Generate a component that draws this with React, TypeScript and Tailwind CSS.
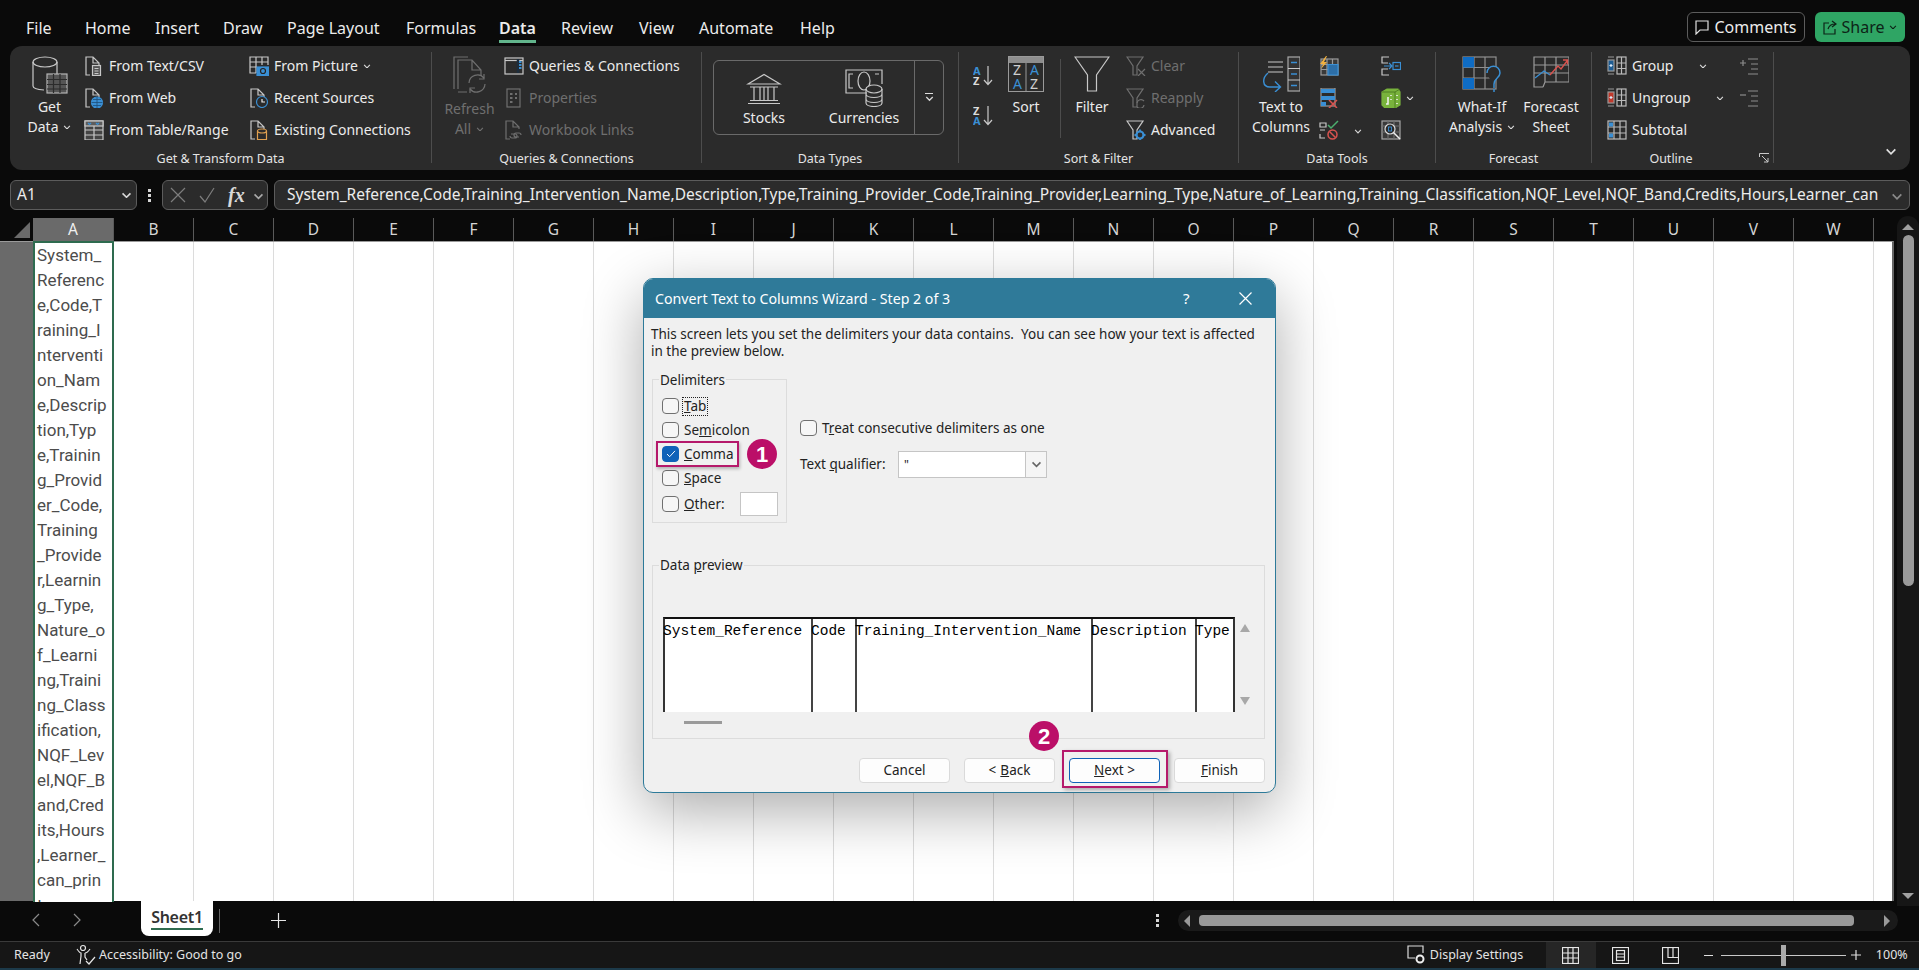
import type { ReactNode } from "react";

const GRAY = "#c8c8c8";
const DIM = "#6f6f6f";
const BLUE = "#3a8fd4";
const COLUMNS = "ABCDEFGHIJKLMNOPQRSTUVW".split("");
const CELL_LINES = [
  "System_", "Referenc", "e,Code,T", "raining_I", "nterventi", "on_Nam", "e,Descrip", "tion,Typ", "e,Trainin",
  "g_Provid", "er_Code,", "Training", "_Provide", "r,Learnin", "g_Type,", "Nature_o", "f_Learni", "ng,Traini",
  "ng_Class", "ification,", "NQF_Lev", "el,NQF_B", "and,Cred", "its,Hours", ",Learner_", "can_prin", "t",
];
const FORMULA =
  "System_Reference,Code,Training_Intervention_Name,Description,Type,Training_Provider_Code,Training_Provider,Learning_Type,Nature_of_Learning,Training_Classification,NQF_Level,NQF_Band,Credits,Hours,Learner_can";

function Icon({ w = 20, h = 20, c = GRAY, children }: { w?: number; h?: number; c?: string; children: ReactNode }) {
  return (
    <svg width={w} height={h} viewBox={`0 0 ${w} ${h}`} fill="none" stroke={c} strokeWidth="1.2" className="shrink-0">
      {children}
    </svg>
  );
}

function Chev({ c = "#d8d8d8", w = 8 }: { c?: string; w?: number }) {
  return (
    <svg width={w} height={w * 0.6} viewBox="0 0 8 5" fill="none" stroke={c} strokeWidth="1.2" className="shrink-0 inline-block">
      <path d="M1 1l3 3 3-3" />
    </svg>
  );
}

const Doc = () => <path d="M6 19H2V1h7l6 6v2M9 1v6h6" />;

const GetDataIcon = () => (
  <Icon w={36} h={38}>
    <ellipse cx="13" cy="6" rx="12" ry="5" />
    <path d="M1 6v24c0 2 4 3.5 11 4M25 6v12" />
    <rect x="15" y="18" width="20" height="19" fill="#555" stroke="#b5b5b5" />
    <path d="M15 23.5h20M15 28.500h20M15 33h20M21.500 18v19M28 18v19" stroke="#2b2b2b" />
  </Icon>
);
const TextCsvIcon = () => (
  <Icon>
    <Doc />
    <rect x="8.500" y="9.500" width="8" height="10" fill="#555" />
    <path d="M10.500 12.500h4M10.500 15h4M10.500 17.500h4" />
  </Icon>
);
const WebIcon = () => (
  <Icon>
    <Doc />
    <circle cx="13" cy="14.500" r="5.500" fill={BLUE} stroke={BLUE} />
    <path d="M7.500 14.500h11M13 9v11M9 11.500h8M9 17.500h8" stroke="#1d4e78" strokeWidth=".8" />
  </Icon>
);
const TableIcon = () => (
  <Icon>
    <rect x="1" y="1" width="18" height="19" fill="#444" />
    <rect x="1" y="1" width="18" height="5" fill="#5d5d5d" />
    <path d="M4 3l1.500 1.500L7 3M12 3l1.500 1.500L15 3" stroke={BLUE} />
    <path d="M1 10h18M1 15h18M10 6v14" />
  </Icon>
);
const PictureIcon = () => (
  <Icon>
    <path d="M7 17H1V1h18v8M1 6h18M1 11h7M7 1v16M13 1v8" />
    <rect x="8" y="11" width="12" height="8.500" fill={BLUE} stroke={BLUE} />
    <circle cx="14" cy="15" r="2.500" stroke="#222" />
  </Icon>
);
const RecentIcon = () => (
  <Icon>
    <Doc />
    <circle cx="13" cy="14" r="5.500" fill="#2b2b2b" stroke={BLUE} />
    <path d="M13 11v3h3" stroke="#eee" />
  </Icon>
);
const ExistingIcon = () => (
  <Icon>
    <Doc />
    <path d="M8.500 11v8.500h9V11" stroke="#e0a050" />
    <ellipse cx="13" cy="11" rx="4.500" ry="2" stroke="#e0a050" />
  </Icon>
);
const QueriesIcon = () => (
  <Icon>
    <rect x="1" y="2" width="18" height="16" />
    <path d="M1 4.500h18" />
    <path d="M14 3v14" strokeWidth="2.500" stroke="#1d2d3c" />
    <path d="M15 6h2.500M15 9h2.500M15 12h2.500" stroke={BLUE} strokeWidth="2" />
  </Icon>
);
const PropertiesIcon = () => (
  <Icon c={DIM}>
    <rect x="3" y="1" width="13" height="18" />
    <path d="M6 6h2.500M11 6h2M6 10h2.500M11 10h2M6 14h2.500" strokeWidth="2" />
  </Icon>
);
const LinksIcon = () => (
  <Icon c={DIM}>
    <Doc />
    <path d="M7 14h4a2 2 0 0 1 0 4H8a2 2 0 0 1-2-2M15 17h-3a2 2 0 0 1 0-4h3a2 2 0 0 1 2 2" />
  </Icon>
);
const RefreshIcon = () => (
  <Icon w={36} h={38} c={DIM}>
    <path d="M1 33V1h14M5 33V4h14l9 10v6M19 4v10h9M5 36h9" transform="translate(1 0)" />
    <path d="M17 27a8.500 8.500 0 0 1 15-5M33 28a8.500 8.500 0 0 1-15 5" />
    <path d="M32 18v5h-5M18 37v-5h5" />
  </Icon>
);
const StocksIcon = () => (
  <Icon w={36} h={32}>
    <path d="M2 11L18 1.500 34 11zM4 14h28M2 30.500h32M4 27.500h28M8 14v13M14 14v13M22 14v13M28 14v13M18 14v13" />
  </Icon>
);
const CurrenciesIcon = () => (
  <Icon w={38} h={38}>
    <path d="M22 24H1V1h36v14" />
    <path d="M8 5H4v14h4M30 5h4" />
    <ellipse cx="19" cy="12" rx="6" ry="9" />
    <ellipse cx="29" cy="20" rx="8" ry="4" fill="#2b2b2b" />
    <path d="M21 20v14c0 2 3.500 3.500 8 3.500s8-1.500 8-3.500V20M21 25c0 2 3.500 3.500 8 3.500s8-1.500 8-3.500M21 30c0 2 3.500 3.500 8 3.500s8-1.500 8-3.500" />
  </Icon>
);
const SortLetters = ({ first, second, firstC, secondC }: { first: string; second: string; firstC: string; secondC: string }) => (
  <svg width="22" height="22" viewBox="0 0 22 22" fill="none" className="shrink-0">
    <text x="0" y="10" fontSize="11" fontWeight="700" fontFamily="Noto Sans" fill={firstC}>{first}</text>
    <text x="0" y="20" fontSize="11" fontWeight="700" fontFamily="Noto Sans" fill={secondC}>{second}</text>
    <path d="M15 1v18M11 15l4 4.500 4-4.500" stroke={GRAY} strokeWidth="1.200" />
  </svg>
);
const SortIcon = () => (
  <svg width="36" height="36" viewBox="0 0 36 36" fill="none" className="shrink-0">
    <rect x=".5" y=".5" width="35" height="35" stroke="#9a9a9a" />
    <rect x="1" y="1" width="34" height="6" fill="#8e8e8e" />
    <path d="M18 7v29" stroke="#9a9a9a" />
    <text x="5" y="19" fontSize="14" fontFamily="Noto Sans" fill="#cfcfcf">Z</text>
    <text x="5" y="33" fontSize="14" fontFamily="Noto Sans" fill={BLUE}>A</text>
    <text x="22" y="19" fontSize="14" fontFamily="Noto Sans" fill={BLUE}>A</text>
    <text x="22" y="33" fontSize="14" fontFamily="Noto Sans" fill="#cfcfcf">Z</text>
  </svg>
);
const FilterIcon = () => (
  <Icon w={36} h={36}>
    <path d="M1 1h34L22.500 19v16h-9V19z" />
  </Icon>
);
const SmallFunnel = () => <path d="M1 1h16l-6 9v9H7v-9z" />;
const ClearIcon = () => (
  <Icon c={DIM}>
    <SmallFunnel />
    <path d="M12 13l7 7M19 13l-7 7" />
  </Icon>
);
const ReapplyIcon = () => (
  <Icon c={DIM}>
    <SmallFunnel />
    <path d="M11 15a4 4 0 0 1 7-2M18 17a4 4 0 0 1-7 2" />
  </Icon>
);
const AdvancedIcon = () => (
  <Icon>
    <SmallFunnel />
    <circle cx="14" cy="15" r="3.500" fill="#2b2b2b" stroke={BLUE} strokeWidth="2.200" />
    <path d="M14 9.500v2M14 18.500v2M8.500 15h2M17.500 15h2" stroke={BLUE} strokeWidth="1.800" />
  </Icon>
);
const TextColumnsIcon = () => (
  <Icon w={38} h={36}>
    <path d="M6 6h15M6 11h15M6 16h15" />
    <path d="M6 17C0 22 0 31 8 31h10M13 25.500L18.500 31 13 36" stroke={BLUE} strokeWidth="1.400" />
    <rect x="26" y="1" width="12" height="34" fill="#333" stroke="#a8a8a8" />
    <path d="M26 12.500h12M26 24h12" />
    <path d="M29 6.500h6M29 18h6M29 29.500h6" stroke={BLUE} strokeWidth="1.500" />
  </Icon>
);
const FlashIcon = () => (
  <Icon>
    <rect x="2" y="3" width="17" height="16" fill="#3a3a3a" stroke="#9a9a9a" />
    <path d="M2 8.500h17M2 13.500h17M8 3v16M13.500 3v16" stroke="#9a9a9a" />
    <path d="M9 8.500h10v10.500H9z" fill="#2d6fa8" stroke={BLUE} />
    <path d="M7 0L1 8h3l-2 5 6-7H5l3-6z" fill="#f0b040" stroke="none" />
  </Icon>
);
const DuplicatesIcon = () => (
  <Icon>
    <rect x="2" y="0" width="14" height="18" stroke="#999" />
    <rect x="2" y="1" width="14" height="4" fill={BLUE} stroke="none" />
    <rect x="2" y="8" width="14" height="4" fill={BLUE} stroke="none" />
    <rect x="2" y="14" width="5" height="4" fill={BLUE} stroke="none" />
    <path d="M10 12l8 8M18 12l-8 8" stroke="#d9534f" strokeWidth="1.500" />
  </Icon>
);
const ValidationIcon = () => (
  <Icon>
    <path d="M1 3h6v4H1zM1 10h5M1 14v4h5" />
    <path d="M9 5l3 3 7-7" stroke="#4caf6e" strokeWidth="1.500" />
    <circle cx="13.500" cy="14.500" r="4.500" stroke="#d9534f" strokeWidth="1.500" />
    <path d="M10.500 11.500l6 6" stroke="#d9534f" strokeWidth="1.500" />
  </Icon>
);
const ConsolidateIcon = () => (
  <Icon>
    <path d="M7 7H1V1h7M7 13H1v6h7" />
    <path d="M3 10h7M8 7l3 3-3 3" stroke={BLUE} />
    <rect x="12" y="6.500" width="7.500" height="7" stroke={BLUE} />
    <path d="M14 10h3.500" stroke={BLUE} />
  </Icon>
);
const ModelIcon = () => (
  <Icon>
    <path d="M1 4l5-3h11l2 3v13l-5 3H4l-3-3z" fill="#79b33c" stroke="#79b33c" />
    <path d="M1 4h13v16M14 4l5-3" stroke="#3f6a18" strokeWidth=".7" />
    <path d="M7 9v7H5M16 7v1M16 11v1M16 15v1M10 7v1M10 11v1" stroke="#f4f4f4" strokeWidth="1.500" />
  </Icon>
);
const RelationIcon = () => (
  <Icon>
    <rect x="1" y="1" width="18" height="18" fill="#3a3a3a" stroke="#a5a5a5" />
    <path d="M1 6h18M1 12h18M7 1v18M13 1v18" stroke="#6d6d6d" />
    <circle cx="9" cy="9" r="5" fill="#2b2b2b" stroke="#ddd" />
    <path d="M12.500 12.500l6.500 6.500" stroke="#eee" strokeWidth="1.500" />
    <rect x="7.500" y="7" width="3" height="4" stroke={BLUE} strokeWidth=".9" />
  </Icon>
);
const WhatIfIcon = () => (
  <Icon w={40} h={36}>
    <rect x="1" y="1" width="33" height="32" stroke="#8f8f8f" />
    <path d="M1 11.500h33M1 22h33M12 1v32M23 1v32" stroke="#8f8f8f" />
    <rect x="1" y="1" width="11" height="10.500" fill="#0f6cc4" stroke="none" />
    <rect x="1" y="22" width="11" height="11" fill="#0f6cc4" stroke="none" />
    <path d="M25 17c0-9 13-9 13 0 0 5-6 5-6 11v4M32 33v3" stroke={BLUE} strokeWidth="1.500" fill="#2b2b2b" />
  </Icon>
);
const ForecastIcon = () => (
  <Icon w={36} h={32}>
    <path d="M10 31H1V1h35v25H12l-2 5M1 9h35M1 17h35M12 1v25M23 1v25" stroke="#9a9a9a" />
    <path d="M2 22l9-7 6 4" stroke={BLUE} strokeWidth="1.300" />
    <path d="M17 19l8-9 3 3 6-8M30 4h4.500v4.500" stroke="#d9534f" strokeWidth="1.300" />
  </Icon>
);
const GroupIcon = ({ accent }: { accent: string }) => (
  <Icon>
    <rect x="1" y="4" width="6" height="11" fill={accent} stroke="#999" />
    <path d="M1 1h6M1 18h6" stroke="#999" />
    <rect x="10" y="1" width="9" height="17" stroke="#bbb" />
    <path d="M10 7h9M10 12.500h9M14.500 1v17" stroke="#bbb" />
    <path d="M2.500 9.500h3M4 8v3" stroke="#ddeeff" />
  </Icon>
);
const SubtotalIcon = () => (
  <Icon>
    <rect x="1" y="1" width="18" height="18" stroke="#bbb" />
    <path d="M1 7h18M1 13h18M7 1v18M13 1v18" stroke="#bbb" />
    <rect x="2" y="2.500" width="4" height="4" fill={BLUE} stroke="none" />
    <rect x="2" y="13.500" width="4" height="4" fill={BLUE} stroke="none" />
  </Icon>
);
const IndentIcon = ({ plus }: { plus: boolean }) => (
  <Icon c="#8d8d8d">
    <path d="M9 3h10M12 8h7M12 13h7M9 18h10" />
    <path d={plus ? "M1 7h6M4 4v6" : "M1 7h6"} />
  </Icon>
);
const AccessIcon = () => (
  <Icon w={22} h={22} c="#e6e6e6">
    <circle cx="7" cy="4" r="2.500" />
    <path d="M1 5c2 3 3 4 4 4v3l-1 8M9 9c2 0 3-1 5-4M9 9v4l2 3" />
    <path d="M10 17l3 3 6-7" />
  </Icon>
);

function Group({ w, label, children }: { w: number; label: string; children: ReactNode }) {
  return (
    <div style={{ width: w }} className="flex h-[111px] shrink-0 flex-col border-r border-[#4d4d4d]">
      <div className="flex h-[94px] shrink-0 items-start">{children}</div>
      <div className="-mb-[8px] h-[25px] shrink-0 text-center text-[12.5px] leading-[25px] text-[#e4e4e4]">{label}</div>
    </div>
  );
}

function Large({ w, icon, lines, dim, iconH = 45 }: { w: number; icon: ReactNode; lines: ReactNode[]; dim?: boolean; iconH?: number }) {
  return (
    <div style={{ width: w }} className={`flex shrink-0 flex-col items-center text-[14px] leading-[20px] ${dim ? "text-[#6f6f6f]" : "text-[#ececec]"}`}>
      <div style={{ height: iconH }} className="flex items-start justify-center pt-[4px]">{icon}</div>
      {lines.map((line, i) => (
        <div key={i} className="flex items-center gap-[5px] whitespace-nowrap">{line}</div>
      ))}
    </div>
  );
}

function Small({ icon, label, dim, after }: { icon: ReactNode; label?: string; dim?: boolean; after?: ReactNode }) {
  return (
    <div className={`flex h-[32px] items-center gap-[5px] whitespace-nowrap text-[14px] ${dim ? "text-[#6f6f6f]" : "text-[#ececec]"}`}>
      {icon}
      {label && <span className="-mt-[2px]">{label}</span>}
      {after}
    </div>
  );
}

function SmallCol({ w, children }: { w: number; children: ReactNode }) {
  return <div style={{ width: w }} className="-mt-[2px] flex shrink-0 flex-col">{children}</div>;
}

function Ribbon() {
  return (
    <div className="mx-[10px] flex h-[124px] w-[1900px] rounded-xl bg-[#2b2b2b] pt-[6px]">
      <Group w={422} label="Get & Transform Data">
        <div className="ml-[5px]" />
        <Large w={69} icon={<GetDataIcon />} lines={["Get", <>Data <Chev /></>]} />
        <SmallCol w={165}>
          <Small icon={<TextCsvIcon />} label="From Text/CSV" />
          <Small icon={<WebIcon />} label="From Web" />
          <Small icon={<TableIcon />} label="From Table/Range" />
        </SmallCol>
        <SmallCol w={170}>
          <Small icon={<PictureIcon />} label="From Picture" after={<Chev />} />
          <Small icon={<RecentIcon />} label="Recent Sources" />
          <Small icon={<ExistingIcon />} label="Existing Connections" />
        </SmallCol>
      </Group>
      <Group w={270} label="Queries & Connections">
        <div className="ml-[3px]" />
        <Large w={69} dim iconH={47} icon={<RefreshIcon />} lines={["Refresh", <>All <Chev c="#6f6f6f" /></>]} />
        <SmallCol w={190}>
          <Small icon={<QueriesIcon />} label="Queries & Connections" />
          <Small dim icon={<PropertiesIcon />} label="Properties" />
          <Small dim icon={<LinksIcon />} label="Workbook Links" />
        </SmallCol>
      </Group>
      <Group w={257} label="Data Types">
        <div className="ml-[11px] mt-[8px] flex h-[75px] w-[231px] rounded-md border border-[#6a6a6a]">
          <div className="flex w-[100px] flex-col items-center pt-[12px] text-[14px] leading-[20px] text-[#ececec]">
            <div className="h-[35px]"><StocksIcon /></div>
            <span>Stocks</span>
          </div>
          <div className="flex w-[100px] flex-col items-center pt-[8px] text-[14px] leading-[20px] text-[#ececec]">
            <div className="h-[39px]"><CurrenciesIcon /></div>
            <span>Currencies</span>
          </div>
          <div className="flex flex-1 flex-col items-center justify-center gap-[2px] border-l border-[#6a6a6a]">
            <span className="h-px w-[8px] bg-[#ddd]" />
            <Chev w={9} />
          </div>
        </div>
      </Group>
      <Group w={280} label="Sort & Filter">
        <div className="ml-[14px] mt-[13px] flex w-[22px] flex-col gap-[18px]">
          <SortLetters first="A" second="Z" firstC={BLUE} secondC="#ddd" />
          <SortLetters first="Z" second="A" firstC="#ddd" secondC={BLUE} />
        </div>
        <div className="ml-[6px]" />
        <Large w={50} icon={<SortIcon />} lines={["Sort"]} />
        <div className="ml-[9px] mt-[7px] h-[79px] w-px bg-[#4d4d4d]" />
        <div className="ml-[6px]" />
        <Large w={50} icon={<FilterIcon />} lines={["Filter"]} />
        <div className="ml-[9px]" />
        <SmallCol w={90}>
          <Small dim icon={<ClearIcon />} label="Clear" />
          <Small dim icon={<ReapplyIcon />} label="Reapply" />
          <Small icon={<AdvancedIcon />} label="Advanced" />
        </SmallCol>
      </Group>
      <Group w={197} label="Data Tools">
        <div className="ml-[5px]" />
        <Large w={74} icon={<TextColumnsIcon />} lines={["Text to", "Columns"]} />
        <div className="ml-[1px]" />
        <SmallCol w={62}>
          <Small icon={<FlashIcon />} />
          <Small icon={<DuplicatesIcon />} />
          <Small icon={<ValidationIcon />} after={<span className="ml-[10px]"><Chev /></span>} />
        </SmallCol>
        <SmallCol w={50}>
          <Small icon={<ConsolidateIcon />} />
          <Small icon={<ModelIcon />} after={<Chev />} />
          <Small icon={<RelationIcon />} />
        </SmallCol>
      </Group>
      <Group w={156} label="Forecast">
        <div className="ml-[4px]" />
        <Large w={84} icon={<WhatIfIcon />} lines={["What-If", <>Analysis <Chev /></>]} />
        <Large w={54} icon={<ForecastIcon />} lines={["Forecast", "Sheet"]} />
      </Group>
      <div className="flex h-[111px] w-[182px] shrink-0 flex-col border-r border-[#4d4d4d]">
        <div className="flex h-[94px] shrink-0 items-start">
          <div className="ml-[15px]" />
          <SmallCol w={132}>
            <Small icon={<GroupIcon accent="#1f5d93" />} after={<><span className="-mt-[2px] w-[62px]">Group</span><Chev /></>} />
            <Small icon={<GroupIcon accent="#c0392b" />} after={<><span className="-mt-[2px] w-[79px]">Ungroup</span><Chev /></>} />
            <Small icon={<SubtotalIcon />} label="Subtotal" />
          </SmallCol>
          <SmallCol w={20}>
            <Small icon={<IndentIcon plus />} />
            <Small icon={<IndentIcon plus={false} />} />
          </SmallCol>
        </div>
        <div className="-mb-[8px] flex h-[25px] shrink-0 items-center text-[12.5px] leading-[25px] text-[#e4e4e4]">
          <span className="w-[158px] text-center">Outline</span>
          <svg width="11" height="11" viewBox="0 0 11 11" fill="none" stroke="#c8c8c8" className="ml-[9px]">
            <path d="M.5 4V.5H10M3 3l6 6M9 5v4H5" />
          </svg>
        </div>
      </div>
      <div className="flex h-[111px] flex-1 items-end justify-end pb-[8px] pr-[13px]">
        <Chev w={12} c="#e0e0e0" />
      </div>
    </div>
  );
}

function FormulaBar() {
  return (
    <div className="mt-[10px] flex h-[30px] items-stretch pl-[10px] pr-[9px]">
      <div className="flex w-[127px] items-center justify-between rounded-md border border-[#5c5c5c] bg-[#2b2b2b] pl-[6px] pr-[4px] text-[15.5px] text-[#ececec]">
        A1
        <Chev w={11} />
      </div>
      <div className="flex w-[25px] flex-col items-center justify-center gap-[2px]">
        <span className="h-[3px] w-[3px] bg-[#d5d5d5]" />
        <span className="h-[3px] w-[3px] bg-[#d5d5d5]" />
        <span className="h-[3px] w-[3px] bg-[#d5d5d5]" />
      </div>
      <div className="flex w-[106px] items-center rounded-md border border-[#5c5c5c] bg-[#2b2b2b] pl-[7px]">
        <Icon w={16} h={16} c="#7d7d7d"><path d="M1 1l14 14M15 1L1 15" /></Icon>
        <div className="ml-[13px]"><Icon w={16} h={16} c="#7d7d7d"><path d="M1 9l5 6L15 1" /></Icon></div>
        <span className="ml-[13px] font-['Liberation_Serif'] text-[20px] font-bold italic leading-none text-[#d8d8d8]">fx</span>
        <span className="ml-[8px]"><Chev w={11} c="#aaa" /></span>
      </div>
      <div className="ml-[6px] flex min-w-0 flex-1 items-center rounded-md border border-[#5c5c5c] bg-[#2b2b2b] pl-[12px] pr-[6px]">
        <span className="flex-1 overflow-hidden whitespace-nowrap text-[15.5px] text-[#ececec]">{FORMULA}</span>
        <span className="ml-[6px]"><Chev w={12} c="#8a8a8a" /></span>
      </div>
    </div>
  );
}

function Sheet() {
  return (
    <div className="mt-[8px] flex h-[683px]">
      <div className="flex w-[1894px] flex-col">
        <div className="flex h-[23px] shrink-0 text-[15.5px] text-[#d5d5d5]">
          <div className="flex w-[33px] items-end justify-end pb-[3px] pr-[3px]">
            <div className="h-0 w-0 border-b-[16px] border-l-[16px] border-b-[#6a6a6a] border-l-transparent" />
          </div>
          {COLUMNS.map((letter, i) => (
            <div
              key={letter}
              className={`flex items-center justify-center border-r border-[#5a5a5a] ${i === 0 ? "w-[81px] bg-[#6a6a6a] text-[#f0f0f0]" : "w-[80px]"}`}
            >
              {letter}
            </div>
          ))}
        </div>
        <div className="flex h-[660px] border-t border-[#9a9a9a] border-r-2 border-r-[#666] bg-white">
          <div className="w-[33px] shrink-0 bg-[#6a6a6a]" />
          <div className="-mt-px h-[661px] w-[81px] shrink-0 overflow-hidden border-2 border-b-0 border-[#2e6b4f] bg-white pl-[2px] font-['Roboto'] text-[17px] leading-[25px] text-[#4c4c4c]">
            {CELL_LINES.map((line) => (
              <div key={line} className="whitespace-nowrap">{line}</div>
            ))}
          </div>
          {COLUMNS.slice(1).map((letter) => (
            <div key={letter} className="w-[80px] shrink-0 border-r border-[#dcdcdc]" />
          ))}
        </div>
      </div>
      <div className="ml-[3px] -mt-[2px] flex h-[690px] w-[22px] flex-col items-center rounded-t-xl bg-[#161616] pt-[8px]">
        <span className="h-0 w-0 border-x-[6px] border-b-[6px] border-x-transparent border-b-[#a0a0a0]" />
        <span className="mt-[5px] h-[351px] w-[11px] rounded-md bg-[#9a9a9a]" />
        <span className="mt-auto mb-[7px] h-0 w-0 border-x-[6px] border-t-[6px] border-x-transparent border-t-[#a0a0a0]" />
      </div>
    </div>
  );
}

function TabBar() {
  return (
    <div className="flex h-[40px] items-start bg-[#0a0a0a]">
      <div className="flex h-[38px] w-[141px] items-center pl-[32px]">
        <Icon w={8} h={14} c="#8a8a8a"><path d="M7 1L1 7l6 6" /></Icon>
        <div className="ml-[33px]"><Icon w={8} h={14} c="#8a8a8a"><path d="M1 1l6 6-6 6" /></Icon></div>
      </div>
      <div className="flex h-[35px] w-[72px] flex-col items-center rounded-b-lg bg-white pt-[4px]">
        <span className="text-[16px] font-semibold leading-[24px] tracking-[-0.3px] text-[#333]">Sheet1</span>
        <span className="-mt-px h-[2px] w-[52px] bg-[#2e6b4f]" />
      </div>
      <div className="ml-[6px] mt-[8px] h-[24px] w-px bg-[#666]" />
      <div className="ml-[51px] mt-[12px]">
        <Icon w={15} h={15} c="#e6e6e6"><path d="M7.500 0v15M0 7.500h15" /></Icon>
      </div>
      <div className="ml-[870px] mt-[13px] flex flex-col gap-[2px]">
        <span className="h-[3px] w-[3px] bg-[#d5d5d5]" />
        <span className="h-[3px] w-[3px] bg-[#d5d5d5]" />
        <span className="h-[3px] w-[3px] bg-[#d5d5d5]" />
      </div>
      <div className="ml-[19px] mt-[9px] flex h-[21px] w-[720px] items-center rounded-full bg-[#1a1a1a] pl-[6px] pr-[8px]">
        <span className="h-0 w-0 border-y-[6px] border-r-[6px] border-y-transparent border-r-[#9a9a9a]" />
        <span className="ml-[9px] h-[11px] w-[655px] rounded-sm bg-[#999]" />
        <span className="ml-auto h-0 w-0 border-y-[6px] border-l-[6px] border-y-transparent border-l-[#9a9a9a]" />
      </div>
    </div>
  );
}

function StatusBar() {
  return (
    <div className="flex h-[27px] items-center border-t border-[#3a3a3a] bg-[#161616] text-[12.5px] text-[#e4e4e4]">
      <span className="ml-[14px] w-[62px]">Ready</span>
      <AccessIcon />
      <span className="ml-[1px]">Accessibility: Good to go</span>
      <div className="ml-[1165px] flex items-center gap-[3px]">
        <Icon w={20} h={20} c="#dcdcdc">
          <path d="M8 13H1V1h15v7" />
          <circle cx="13" cy="14" r="3.500" stroke="#eee" strokeWidth="2" />
        </Icon>
        <span className="w-[116px]">Display Settings</span>
      </div>
      <div className="flex h-[26px] w-[50px] items-center justify-center bg-[#262626]">
        <Icon w={17} h={17} c="#e6e6e6"><rect x=".5" y=".5" width="16" height="16" /><path d="M.5 6h16M.5 11h16M6 .5v16M11 .5v16" /></Icon>
      </div>
      <div className="flex w-[50px] justify-center">
        <Icon w={17} h={17} c="#e6e6e6"><rect x=".5" y=".5" width="16" height="16" /><rect x="4.500" y="3.500" width="8" height="10" /><path d="M4.500 7h8M4.500 10h8" /></Icon>
      </div>
      <div className="flex w-[50px] justify-center">
        <Icon w={17} h={17} c="#e6e6e6"><rect x=".5" y=".5" width="16" height="16" /><path d="M6 .5v10h10M11 .5v10" /></Icon>
      </div>
      <span className="ml-[8px] h-px w-[9px] bg-[#e0e0e0]" />
      <div className="relative ml-[8px] h-px w-[125px] bg-[#c8c8c8]">
        <span className="absolute left-[60px] -top-[10px] h-[21px] w-[5px] bg-[#aaa]" />
      </div>
      <div className="ml-[5px]"><Icon w={10} h={10} c="#e0e0e0"><path d="M5 0v10M0 5h10" /></Icon></div>
      <span className="ml-[15px]">100%</span>
    </div>
  );
}

function Check({ checked }: { checked?: boolean }) {
  return (
    <span className={`flex h-4 w-[17px] shrink-0 items-center justify-center rounded-[4px] border ${checked ? "border-[#0f62b8] bg-[#0f62b8]" : "border-[#707070] bg-[#f6f6f6]"}`}>
      {checked && (
        <svg width="10" height="8" viewBox="0 0 11 9" fill="none" stroke="#fff" strokeWidth="1.100">
          <path d="M1 4.500L4 7.500 10 1" />
        </svg>
      )}
    </span>
  );
}

function Badge({ n, className }: { n: number; className: string }) {
  return (
    <span className={`absolute flex h-[30px] w-[30px] items-center justify-center rounded-full bg-[#bb0f68] font-['Liberation_Sans'] text-[22px] font-bold text-white ${className}`}>
      {n}
    </span>
  );
}

function WizardButton({ children, active }: { children: ReactNode; active?: boolean }) {
  return (
    <div className={`relative flex h-[25px] w-[91px] items-center justify-center rounded-[4px] border bg-[#fdfdfd] text-[13.5px] text-[#222] ${active ? "border-[#0f62b8]" : "border-[#dadada]"}`}>
      {children}
      {active && (
        <>
          <span className="absolute -left-[8px] -top-[9px] h-[38px] w-[106px] border-2 border-[#b5196b] shadow-[2px_2px_4px_rgba(0,0,0,0.3)]" />
          <Badge n={2} className="-left-[41px] -top-[38px]" />
        </>
      )}
    </div>
  );
}

function PreviewColumn({ w, text, last }: { w?: string; text: string; last?: boolean }) {
  return (
    <div className={`-mt-[2px] pt-[2px] ${w ?? "flex-1"} ${last ? "" : "border-r-2 border-[#444]"}`}>
      <span className="-ml-[2px] block whitespace-nowrap">{text}</span>
    </div>
  );
}

function Wizard() {
  return (
    <div className="absolute left-[643px] top-[278px] h-[515px] w-[633px] rounded-[10px] border border-[#2d7a99] bg-[#f0f0f0] text-[13.5px] leading-[17px] text-[#222] shadow-[0_18px_60px_rgba(0,0,0,0.33)]">
      <div className="flex h-[39px] items-center rounded-t-[9px] bg-[#2f7a99] pl-[11px] text-[14.2px] text-white">
        <span className="w-[528px]">Convert Text to Columns Wizard - Step 2 of 3</span>
        <span className="text-[15px]">?</span>
        <span className="ml-[49px]">
          <Icon w={13} h={13} c="#fff"><path d="M.5.5l12 12M12.500.5l-12 12" /></Icon>
        </span>
      </div>
      <p className="mb-[19px] ml-[7px] mt-[8px] w-[620px] whitespace-nowrap">
        This screen lets you set the delimiters your data contains.&nbsp; You can see how your text is affected
        <br />
        in the preview below.
      </p>
      <div className="flex">
        <div className="relative ml-[8px] h-[144px] w-[135px] border border-[#dcdcdc] pl-[9px] pt-[14px]">
          <span className="absolute -top-[8px] left-[6px] bg-[#f0f0f0] px-px">Delimiters</span>
          <div className="flex h-[24px] items-center gap-[5px]">
            <Check />
            <span className="-ml-[2px] border border-dotted border-[#222] px-[1px] leading-[17px]"><u>T</u>ab</span>
          </div>
          <div className="flex h-[24px] items-center gap-[5px]">
            <Check />
            <span>Se<u>m</u>icolon</span>
          </div>
          <div className="relative flex h-[24px] items-center gap-[5px]">
            <Check checked />
            <span><u>C</u>omma</span>
            <span className="absolute -left-[6px] -top-px h-[26px] w-[83px] border-2 border-[#b5196b] shadow-[1px_2px_3px_rgba(0,0,0,0.25)]" />
            <Badge n={1} className="left-[85px] -top-[3px]" />
          </div>
          <div className="flex h-[24px] items-center gap-[5px]">
            <Check />
            <span><u>S</u>pace</span>
          </div>
          <div className="mt-[2px] flex h-[24px] items-center gap-[5px]">
            <Check />
            <span className="w-[51px]"><u>O</u>ther:</span>
            <span className="h-[24px] w-[38px] border border-[#c5c5c5] bg-white" />
          </div>
        </div>
        <div className="ml-[13px] pt-[39px]">
          <div className="flex h-[20px] items-center gap-[5px]">
            <Check />
            <span>T<u>r</u>eat consecutive delimiters as one</span>
          </div>
          <div className="mt-[13px] flex h-[27px] items-center">
            <span className="w-[98px]">Text <u>q</u>ualifier:</span>
            <div className="flex h-[27px] w-[149px] items-center border border-[#c5c5c5] bg-white pl-[5px]">
              <span className="flex-1 text-[12px]">"</span>
              <span className="flex h-full w-[21px] items-center justify-center border-l border-[#c5c5c5] bg-[#f5f5f5]">
                <Chev w={11} c="#666" />
              </span>
            </div>
          </div>
        </div>
      </div>
      <div className="relative ml-[8px] mt-[42px] h-[174px] w-[613px] border border-[#dcdcdc] pl-[10px] pt-[51px]">
        <span className="absolute -top-[9px] left-[6px] bg-[#f0f0f0] px-px">Data <u>p</u>review</span>
        <div className="flex">
          <div className="flex h-[95px] w-[572px] border-x-2 border-t-2 border-x-[#333] border-t-[#111] bg-white pt-[2px] font-['Liberation_Mono'] text-[14.5px] leading-[20px] text-black">
            <PreviewColumn w="w-[148px]" text="System_Reference" />
            <PreviewColumn w="w-[44px]" text="Code" />
            <PreviewColumn w="w-[236px]" text="Training_Intervention_Name" />
            <PreviewColumn w="w-[104px]" text="Description" />
            <PreviewColumn text="Type" last />
          </div>
          <div className="ml-[5px] flex h-[95px] flex-col justify-between py-[7px]">
            <span className="h-0 w-0 border-x-[5px] border-b-[8px] border-x-transparent border-b-[#a8a8a8]" />
            <span className="h-0 w-0 border-x-[5px] border-t-[8px] border-x-transparent border-t-[#a8a8a8]" />
          </div>
        </div>
        <div className="ml-[21px] mt-[9px] h-[3px] w-[38px] bg-[#9a9a9a]" />
      </div>
      <div className="mt-[19px] flex justify-end gap-[14px] pr-[10px]">
        <WizardButton>Cancel</WizardButton>
        <WizardButton>{"< "}<u className="ml-[4px]">B</u>ack</WizardButton>
        <WizardButton active><u>N</u>ext &gt;</WizardButton>
        <WizardButton><u>F</u>inish</WizardButton>
      </div>
    </div>
  );
}

export default function App() {
  const tabs = ["File", "Home", "Insert", "Draw", "Page Layout", "Formulas", "Data", "Review", "View", "Automate", "Help"];
  const tabWidths = [59, 70, 68, 64, 119, 93, 62, 78, 60, 101, 40];
  return (
    <div className="relative h-[970px] w-[1919px] overflow-hidden bg-[#0a0a0a] font-['Noto_Sans',sans-serif]">
      <div className="flex h-[46px] items-start pl-[26px] pt-[17px]">
        {tabs.map((tab, i) => (
          <div key={tab} style={{ width: tabWidths[i] }} className="flex shrink-0 flex-col items-start text-[16px] leading-[22px] text-[#ececec]">
            <span className={tab === "Data" ? "border-b-[3px] border-[#62b58c] pb-[1px] font-semibold" : ""}>{tab}</span>
          </div>
        ))}
        <div className="ml-auto mr-[14px] -mt-[5px] flex gap-[10px]">
          <div className="flex h-[30px] w-[118px] items-center justify-center gap-[5px] rounded-md border border-[#5c5c5c] text-[16px] text-[#ececec]">
            <Icon w={14} h={15} c="#e0e0e0"><path d="M1 1h12v9H5l-4 4z" /></Icon>
            Comments
          </div>
          <div className="flex h-[30px] w-[90px] items-center justify-center gap-[5px] rounded-md bg-[#2fa564] text-[16px] text-[#0d2417]">
            <Icon w={14} h={15} c="#0d2417"><path d="M6 3H1v11h11V9M5 9c1-3 3-5 7-5M9 1l4 3-4 3" /></Icon>
            Share
            <Chev c="#0d2417" />
          </div>
        </div>
      </div>
      <Ribbon />
      <FormulaBar />
      <Sheet />
      <TabBar />
      <StatusBar />
      <div className="h-[2px] bg-[#1c3a4a]" />
      <Wizard />
    </div>
  );
}
